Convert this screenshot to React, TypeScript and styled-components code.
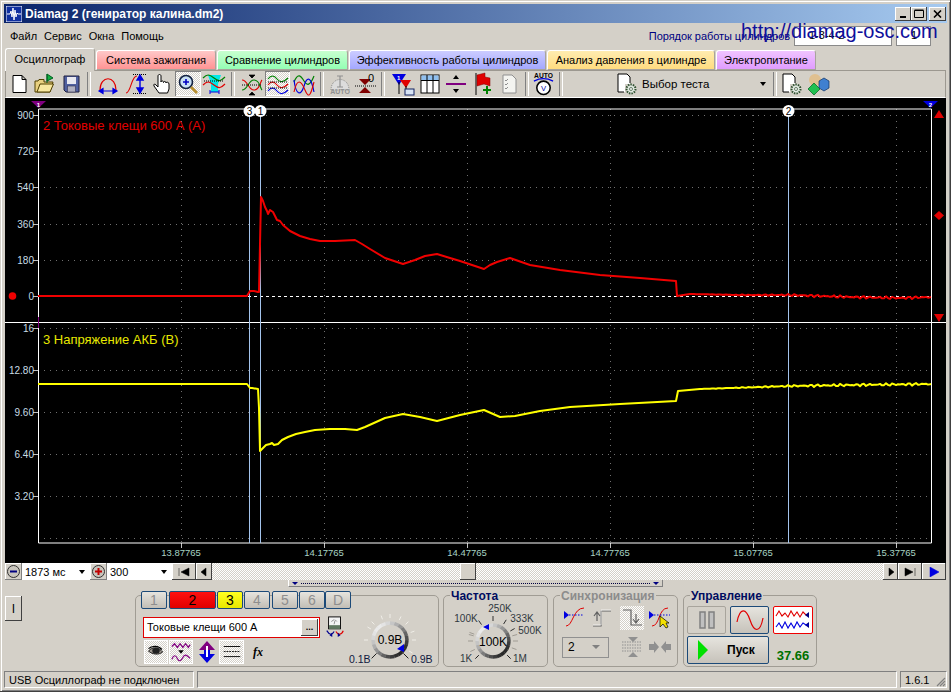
import React from 'react';
import styled, { createGlobalStyle } from 'styled-components';

const FACE = '#d4d0c8';
const UI = '"Liberation Sans", Arial, sans-serif';

const Global = createGlobalStyle`
  html, body { margin: 0; padding: 0; background: ${FACE}; overflow: hidden; }
  * { box-sizing: border-box; }
`;

const Win = styled.div`
  position: relative;
  width: 951px;
  height: 692px;
  padding: 4px;
  background: ${FACE};
  font: 11px ${UI};
  color: #000;
  display: flex;
  flex-direction: column;
  box-shadow: inset -1px -1px 0 #404040, inset 1px 1px 0 ${FACE}, inset 2px 2px 0 #fff, inset -2px -2px 0 #808080;
`;
const TitleBar = styled.div`
  height: 19px;
  flex: none;
  display: flex;
  align-items: center;
  padding: 0 1px 0 2px;
  background: linear-gradient(90deg, #0a246a, #a6caf0);
  color: #fff;
  font: bold 12px ${UI};
`;
const TitleText = styled.span`
  flex: 1;
  margin-left: 3px;
  white-space: nowrap;
`;
const WinBtn = styled.div<{ $gap?: number; $w?: number }>`
  width: ${p => p.$w ?? 16}px;
  height: 14px;
  margin-left: ${p => p.$gap ?? 0}px;
  background: ${FACE};
  box-shadow: inset -1px -1px 0 #404040, inset 1px 1px 0 #fff;
  display: flex;
  align-items: center;
  justify-content: center;
`;
const MenuBar = styled.div`
  height: 23px;
  flex: none;
  display: flex;
  align-items: center;
  padding: 2px 16px 0 6px;
`;
const MenuItem = styled.span`
  margin-right: 7px;
  font-size: 11px;
`;
const Spacer = styled.div`
  flex: 1;
`;
const OrderLabel = styled.span`
  color: #000080;
  margin-right: 4px;
  letter-spacing: -0.05px;
`;
const OrderCombo = styled.div<{ $w: number; $ml?: number }>`
  width: ${p => p.$w}px;
  height: 20px;
  margin-left: ${p => p.$ml ?? 0}px;
  background: #fff;
  border: 1px solid #8a8a8a;
  padding: 2px 0 0 14px;
  font-size: 11px;
`;
const Watermark = styled.div`
  position: absolute;
  left: 741px;
  top: 20px;
  font: 20px ${UI};
  color: #10109c;
  white-space: nowrap;
`;
const TabRow = styled.div`
  height: 24px;
  flex: none;
  display: flex;
  align-items: flex-end;
  gap: 1px;
  padding-left: 1px;
  position: relative;
  z-index: 1;
`;
const Tab = styled.div<{ $w: number; $from?: string; $to?: string; $active?: boolean }>`
  width: ${p => p.$w}px;
  height: ${p => (p.$active ? 23 : 20)}px;
  margin-bottom: ${p => (p.$active ? -1 : 0)}px;
  display: flex;
  align-items: center;
  justify-content: center;
  padding-bottom: ${p => (p.$active ? 3 : 0)}px;
  font-size: 11px;
  border-radius: 3px 3px 0 0;
  border: 1px solid #a8a49c;
  border-bottom: ${p => (p.$active ? 'none' : '1px solid #a8a49c')};
  border-top-color: #fff;
  border-left-color: #fff;
  background: ${p => (p.$active ? FACE : `linear-gradient(${p.$from}, ${p.$to})`)};
`;
const Inner = styled.div`
  flex: 1;
  display: flex;
  flex-direction: column;
  padding: 0 1px;
  min-height: 0;
`;
const Toolbar = styled.div`
  height: 28px;
  flex: none;
  display: flex;
  align-items: center;
  border: 1px solid #9c9890;
  border-bottom: 1px solid #fff;
  padding-bottom: 1px;
`;
const ToolBtn = styled.div<{ $w: number; $on?: boolean }>`
  width: ${p => p.$w}px;
  height: 25px;
  flex: none;
  display: flex;
  align-items: center;
  justify-content: center;
  background: ${p => (p.$on ? 'repeating-conic-gradient(#fff 0 25%, #d4d0c8 0 50%) 0 0/2px 2px' : 'transparent')};
  box-shadow: ${p => (p.$on ? 'inset 1px 1px 0 #808080, inset -1px -1px 0 #fff' : 'none')};
`;
const Sep = styled.div<{ $w: number }>`
  width: ${p => p.$w}px;
  height: 24px;
  flex: none;
  display: flex;
  justify-content: center;
  &::after {
    content: '';
    width: 2px;
    height: 100%;
    border-left: 1px solid #808080;
    border-right: 1px solid #fff;
  }
`;
const TestSelect = styled.div`
  width: 205px;
  flex: none;
  display: flex;
  align-items: center;
  padding-left: 48px;
  gap: 3px;
  font-size: 11.5px;
`;
const Caret = styled.i`
  display: block;
  width: 0;
  height: 0;
  border: 3px solid transparent;
  border-top: 4px solid #000;
  border-bottom: 0;
  margin-left: auto;
  margin-right: 6px;
`;
const Scope = styled.svg`
  display: block;
  width: 941px;
  height: 465px;
  flex: none;
  background: #000;
`;
const SliderRow = styled.div`
  height: 17px;
  flex: none;
  display: flex;
  align-items: stretch;
`;
const RoundBtn = styled.div`
  width: 17px;
  display: flex;
  align-items: center;
  justify-content: center;
  background: ${FACE};
  box-shadow: inset -1px -1px 0 #808080, inset 1px 1px 0 #fff;
`;
const TimeCombo = styled.div<{ $w: number }>`
  width: ${p => p.$w}px;
  background: #fff;
  display: flex;
  align-items: center;
  padding-left: 3px;
  font-size: 11px;
  ${Caret} { margin-right: 5px; }
`;
const NavBtn = styled.div<{ $w: number }>`
  width: ${p => p.$w}px;
  flex: none;
  display: flex;
  align-items: center;
  justify-content: center;
  background: ${FACE};
  box-shadow: inset -1px -1px 0 #404040, inset 1px 1px 0 #fff;
`;
const Track = styled.div`
  flex: 1;
  display: flex;
  background: repeating-conic-gradient(#fff 0 25%, #d4d0c8 0 50%) 0 0/2px 2px;
  padding-left: 248px;
`;
const Thumb = styled.div`
  width: 16px;
  background: ${FACE};
  box-shadow: inset -1px -1px 0 #404040, inset 1px 1px 0 #fff;
`;
const SplitRow = styled.div`
  height: 7px;
  flex: none;
  padding-left: 283px;
`;
const Split = styled.div`
  width: 375px;
  height: 7px;
  display: flex;
  align-items: center;
  justify-content: space-between;
  padding: 0 3px;
  border: 1px solid #808080;
  border-top: none;
  border-left-color: #fff;
  background: ${FACE};
`;
const SplitDots = styled.div`
  flex: 1;
  height: 0;
  margin: 0 3px;
  border-top: 1px dotted #000040;
`;
const SplitArrow = styled.i`
  display: block;
  width: 0;
  height: 0;
  border: 3px solid transparent;
  border-top: 3px solid #000080;
  border-bottom: 0;
`;
const Bottom = styled.div`
  height: 84px;
  flex: none;
  display: flex;
  align-items: flex-start;
`;
const IBtn = styled.div`
  width: 17px;
  height: 25px;
  margin-top: 9px;
  margin-right: 113px;
  display: flex;
  align-items: center;
  justify-content: center;
  font-size: 12px;
  background: ${FACE};
  box-shadow: inset -1px -1px 0 #404040, inset 1px 1px 0 #fff;
`;
const Group = styled.div<{ $w: number; $ml?: number }>`
  position: relative;
  width: ${p => p.$w}px;
  height: 72px;
  margin-top: 8px;
  margin-left: ${p => p.$ml ?? 0}px;
  border: 1px solid #a09c94;
  border-radius: 5px;
  flex: none;
`;
const Legend = styled.span<{ $off?: boolean }>`
  position: absolute;
  top: -5px;
  left: 6px;
  padding: 0 1px;
  background: ${FACE};
  font: bold 12px/11px ${UI};
  color: ${p => (p.$off ? '#8c8c8c' : '#000c60')};
  white-space: nowrap;
`;
const ChannelRow = styled.div`
  display: flex;
  margin: -5px 0 0 5px;
  height: 18px;
`;
const Channel = styled.div<{ $w: number; $tone: 'off' | 'red' | 'yellow'; $ml: number }>`
  width: ${p => p.$w}px;
  margin-left: ${p => p.$ml}px;
  border: 1px solid #1c4a78;
  border-radius: 2px;
  display: flex;
  align-items: center;
  justify-content: center;
  font: 14px ${UI};
  color: ${p => (p.$tone === 'off' ? '#8e8e8e' : '#000')};
  background: ${p =>
    p.$tone === 'red'
      ? 'linear-gradient(#ff1010, #e00000)'
      : p.$tone === 'yellow'
      ? 'linear-gradient(#ffff20, #e8e800)'
      : 'linear-gradient(#e6e4de, #c2beb6)'};
`;
const ChannelBody = styled.div`
  display: flex;
`;
const ChannelLeft = styled.div`
  width: 210px;
  padding: 7px 0 0 7px;
  display: flex;
  flex-direction: column;
`;
const SensorRow = styled.div`
  display: flex;
  gap: 4px;
  align-items: center;
`;
const Sensor = styled.div`
  width: 177px;
  height: 21px;
  border: 1px solid #e00000;
  background: #fff;
  display: flex;
  align-items: center;
  justify-content: space-between;
  padding: 0 1px 0 3px;
  font-size: 11px;
`;
const DotsBtn = styled.div`
  width: 17px;
  height: 17px;
  background: ${FACE};
  box-shadow: inset -1px -1px 0 #404040, inset 1px 1px 0 #fff;
  display: flex;
  align-items: center;
  justify-content: center;
  font: bold 9px/6px ${UI};
`;
const IconRow = styled.div`
  display: flex;
  margin-top: 2px;
  padding-left: 1px;
  align-items: center;
`;
const ChBtn = styled.div<{ $w: number; $on?: boolean; $ml?: number }>`
  width: ${p => p.$w}px;
  height: 24px;
  margin-left: ${p => p.$ml ?? 0}px;
  flex: none;
  display: flex;
  align-items: center;
  justify-content: center;
  background: ${p => (p.$on ? 'repeating-conic-gradient(#fff 0 25%, #d4d0c8 0 50%) 0 0/2px 2px' : 'transparent')};
  border: ${p => (p.$on ? '1px solid #fff' : 'none')};
`;
const Fx = styled.span`
  font: italic bold 12px "Liberation Serif", serif;
`;
const KnobSvg = styled.svg<{ $w: number; $h: number }>`
  display: block;
  width: ${p => p.$w}px;
  height: ${p => p.$h}px;
  flex: none;
`;
const SyncGrid = styled.div`
  display: grid;
  grid-template-columns: 43px 13px 28px 28px;
  grid-template-rows: 24px 24px;
  align-items: center;
  justify-items: center;
  padding: 10px 0 0 8px;
  row-gap: 5px;
`;
const SyncBtn = styled.div<{ $on?: boolean; $col?: number }>`
  grid-column: ${p => p.$col ?? 'auto'};
  width: 24px;
  height: 24px;
  display: flex;
  align-items: center;
  justify-content: center;
  background: ${p => (p.$on ? 'repeating-conic-gradient(#fff 0 25%, #d4d0c8 0 50%) 0 0/2px 2px' : 'transparent')};
`;
const SyncFirstRow = styled.div`
  grid-column: 1 / 3;
  justify-self: stretch;
  display: flex;
  justify-content: space-between;
  padding: 0 3px 0 1px;
`;
const SyncCombo = styled.div`
  grid-column: 1 / 3;
  justify-self: start;
  width: 47px;
  height: 21px;
  border: 1px solid #909090;
  display: flex;
  align-items: center;
  padding-left: 5px;
  font-size: 12px;
  ${Caret} { margin-right: 8px; border-top-color: #808080; border-width: 4px; border-top-width: 4px; border-bottom: 0; }
`;
const CtrlGrid = styled.div`
  display: grid;
  grid-template-columns: 39px 39px 40px;
  grid-template-rows: 28px 28px;
  gap: 2px 4px;
  padding: 10px 0 0 3px;
`;
const CtrlBtn = styled.div<{ $kind: 'flat' | 'blue' | 'red'; $span?: number }>`
  grid-column: span ${p => p.$span ?? 1};
  border-radius: 2px;
  display: flex;
  align-items: center;
  justify-content: center;
  border: 1px solid ${p => (p.$kind === 'flat' ? '#a8a49c' : p.$kind === 'blue' ? '#1c4a78' : '#f00000')};
  background: ${p =>
    p.$kind === 'red' ? '#fff' : p.$kind === 'blue' ? 'linear-gradient(#e6e4de, #c6c2ba)' : FACE};
`;
const StartBtn = styled(CtrlBtn)`
  justify-content: flex-start;
  padding-left: 9px;
  gap: 18px;
  font: bold 12px ${UI};
`;
const Rate = styled.div`
  align-self: end;
  justify-self: center;
  font: bold 13px ${UI};
  color: #007000;
  padding-bottom: 1px;
`;
const Status = styled.div`
  height: 17px;
  flex: none;
  display: flex;
  gap: 3px;
  margin: 0 -1px;
`;
const StatusCell = styled.div<{ $w?: number }>`
  width: ${p => (p.$w ? `${p.$w}px` : 'auto')};
  flex: ${p => (p.$w ? 'none' : '1')};
  position: relative;
  display: flex;
  align-items: center;
  padding-left: 4px;
  font-size: 11px;
  border: 1px solid;
  border-color: #808080 #fff #fff #808080;
`;
const Grip = styled.svg`
  position: absolute;
  right: 0;
  bottom: 0;
  width: 12px;
  height: 12px;
`;

/* ---------- chart data ---------- */
type P = [number, number];
const RED: P[] = [
  [38, 296], [247, 296], [250, 291], [254, 291], [258, 292], [259, 292], [261, 197], [263, 201], [265, 207], [267, 211], [268, 214], [270, 210], [273, 212], [275, 216], [277, 220], [280, 221], [283, 225], [290, 231], [300, 236], [310, 239], [320, 241], [335, 241], [355, 240], [362, 244], [370, 249], [385, 258], [403, 264], [415, 260], [425, 256], [437, 254], [450, 258], [460, 261], [475, 266], [484, 269], [490, 265], [497, 262], [510, 258], [530, 265], [560, 270], [600, 275], [640, 278], [676, 281], [677, 296], [690, 294], [740, 295], [790, 295], [850, 297], [900, 298], [931, 297],
];
const YELLOW: P[] = [
  [38, 384], [247, 384], [250, 388], [252, 388], [258, 389], [259, 408], [260, 451], [263, 448], [266, 445], [270, 444], [272, 443], [274, 445], [278, 444], [282, 440], [288, 437], [296, 434], [305, 432], [315, 430], [330, 429], [345, 429], [357, 430], [365, 427], [385, 418], [403, 414], [420, 417], [437, 421], [460, 415], [484, 410], [500, 417], [515, 416], [540, 411], [570, 407], [620, 404], [676, 401], [678, 391], [700, 389], [790, 386], [850, 385], [931, 384],
];
/* the trace gets a little noise towards its right end */
const roughen = (a: P[], from: number, amp: number): P[] => {
  const out: P[] = [];
  a.forEach((p, i) => {
    const n = a[i + 1];
    if (!n || n[0] <= from) {
      out.push(p);
      return;
    }
    for (let x = p[0]; x < n[0]; x += 2) {
      const y = p[1] + ((n[1] - p[1]) * (x - p[0])) / (n[0] - p[0]);
      const g = Math.min(1, (x - from) / 120);
      out.push([x, y + amp * g * Math.sin(x * 1.7) * Math.cos(x * 0.61)]);
    }
  });
  return out;
};
const pts = (a: P[]) => a.map(p => p.join(',')).join(' ');
const TIMES: [number, string][] = [[181, '13.87765'], [324, '14.17765'], [467, '14.47765'], [610, '14.77765'], [753, '15.07765'], [896, '15.37765']];
const Y1: [number, string][] = [[115, '900'], [151, '720'], [187, '540'], [224, '360'], [260, '180'], [296, '0']];
const Y2: [number, string][] = [[328, '16'], [370, '12.80'], [412, '9.60'], [454, '6.40'], [496, '3.20']];
const GRID_Y = [115, 151, 187, 224, 260, 328, 370, 412, 454, 496, 538];
const AXIS = '#c8dce4';

const Cursor = ({ x, n }: { x: number; n: string }) => (
  <g>
    <line x1={x + 0.5} x2={x + 0.5} y1={109} y2={543} stroke="#a4c4ec" />
    <circle cx={x + 0.5} cy={111} r={6} fill="#fff" />
    <text x={x + 0.5} y={115} textAnchor="middle" fontSize={10} fill="#000" fontFamily={UI}>{n}</text>
  </g>
);

const ScopeChart = () => (
  <Scope viewBox="5 98 941 465" fontFamily={UI}>
    {GRID_Y.map(y => (
      <line key={y} x1={38} x2={931} y1={y + 0.5} y2={y + 0.5} stroke="#707070" strokeDasharray="1 5" />
    ))}
    {TIMES.map(([x, t]) => (
      <g key={t}>
        <line x1={x + 0.5} x2={x + 0.5} y1={109} y2={543} stroke="#707070" strokeDasharray="1 5" />
        <line x1={x + 0.5} x2={x + 0.5} y1={543} y2={548} stroke="#c0c0c0" />
        <text x={x} y={556} textAnchor="middle" fontSize={9.5} fill="#a8d4c4">{t}</text>
      </g>
    ))}
    {[...Y1, ...Y2].map(([y, t]) => (
      <g key={t}>
        <line x1={33} x2={38} y1={y + 0.5} y2={y + 0.5} stroke="#c0c0c0" />
        <text x={34} y={y + 4} textAnchor="end" fontSize={10} fill={AXIS}>{t}</text>
      </g>
    ))}
    <line x1={38} x2={931} y1={296.5} y2={296.5} stroke="#fff" strokeDasharray="3 3" />
    <path d="M38.5 109V543H931.5V109H38.5M5 322.5H946" fill="none" stroke="#fff" />
    <line x1={38.5} x2={38.5} y1={317} y2={328} stroke="#800080" />
    <Cursor x={249} n="3" />
    <Cursor x={260} n="1" />
    <Cursor x={788} n="2" />
    <polyline points={pts(roughen(RED, 700, 1.4))} fill="none" stroke="#f00000" strokeWidth={2} strokeLinejoin="round" />
    <polyline points={pts(roughen(YELLOW, 700, 1.4))} fill="none" stroke="#ffff00" strokeWidth={2} strokeLinejoin="round" />
    <text x={43} y={130} fontSize={13} fill="#e00000">2 Токовые клещи 600 А (А)</text>
    <text x={43} y={344} fontSize={13} fill="#e8e800">3 Напряжение АКБ (В)</text>
    <path d="M31 101H46L38.5 108Z" fill="#800080" />
    <text x={38.5} y={107} textAnchor="middle" fontSize={6} fontWeight="bold" fill="#fff">1</text>
    <path d="M923 101H938L930.5 108Z" fill="#0000e0" />
    <text x={930.5} y={107} textAnchor="middle" fontSize={6} fontWeight="bold" fill="#fff">2</text>
    <path d="M939 110L944 118H934Z" fill="#e00000" />
    <path d="M939 211L944 215.5L939 220L934 215.5Z" fill="#e00000" />
    <path d="M934 314H944L939 322Z" fill="#e00000" />
    <circle cx={12.5} cy={296} r={3.8} fill="#f00000" />
  </Scope>
);

/* ---------- icons ---------- */
type IP = { children: React.ReactNode; s?: number };
const Ic = ({ children, s = 24 }: IP) => (
  <svg width={s} height={s} viewBox="0 0 24 24" fill="none">{children}</svg>
);
const Blue = '#0000e0';
const IconNew = () => <Ic><path d="M6 3.5H15L19 7.5V20.5H6Z M15 3.5V7.5H19" fill="#fff" stroke="#000" /></Ic>;
const IconOpen = () => <Ic><path d="M3 20V9H6L7 7.5H12V10H21L18 20Z" fill="#e8d080" stroke="#504000" /><path d="M5 20L8 12H21.5L18 20Z" fill="#f8e8a0" stroke="#504000" /><path d="M15 2V11M15 2L21 6L15 9Z" fill="#10b040" stroke="#006020" /></Ic>;
const IconSave = () => <Ic><path d="M5 4H20V20H7L5 18Z" fill="#5060a0" stroke="#202040" /><rect x="8" y="5" width="9" height="7" fill="#e8e8f0" /><rect x="8.5" y="14" width="8" height="6" fill="#b0b0c0" stroke="#303050" strokeWidth=".6" /></Ic>;
const IconArcWidth = () => <Ic><path d="M4 18C4 3 20 3 20 18" stroke="#e00000" strokeWidth="1.2" /><path d="M4 19H20M3 19L7 16.5V21.5ZM21 19L17 16.5V21.5Z" stroke={Blue} fill={Blue} strokeWidth="1.2" /></Ic>;
const IconSHeight = () => <Ic><path d="M2 21C7 21 7 4 13 4" stroke="#e00000" strokeWidth="1.1" /><path d="M9 2.5H22M9 21.5H22" stroke="#000" strokeDasharray="1 1" /><path d="M16 5V19M16 3L13 8H19ZM16 21L13 16H19Z" stroke={Blue} fill={Blue} strokeWidth="1.4" /></Ic>;
const IconHand = () => <Ic><path d="M9 21L4 14C3 12 5 11.5 6 13L8 15V4C8 2 11 2 11 4V10C11 8.5 13.5 8.5 13.5 10.5C13.5 9 16 9 16 11C16 9.8 19 9.8 19 12V17L17.5 21Z" fill="#fff" stroke="#000" strokeWidth="1" /></Ic>;
const IconZoom = () => <Ic><circle cx="10" cy="10" r="6.5" fill="#c8e0f4" stroke="#102040" strokeWidth="1.6" /><path d="M7 10H13M10 7V13" stroke="#0000c0" strokeWidth="1.6" /><path d="M15 15L21 21" stroke="#b89030" strokeWidth="2.6" /></Ic>;
const IconCyan = () => <Ic><path d="M6 3H19L16 12V20H9V12Z" fill="#00e8e8" /><path d="M1 6C5 2 7 2 12 6S19 9 23 5" stroke="#008000" strokeWidth="1.2" /><path d="M1 13C5 9 7 9 12 13S19 16 23 12" stroke="#e00000" strokeWidth="1.2" /><path d="M2 9H22" stroke="#000" strokeDasharray="1 1" /><path d="M8 20H17M8 18V22M17 18V22" stroke={Blue} /></Ic>;
const IconCross = () => <Ic><path d="M2 8C8 8 8 18 14 18S20 10 22 8" stroke="#e00000" strokeWidth="1.1" /><path d="M2 18C8 18 8 8 14 8S20 16 22 18" stroke="#008000" strokeWidth="1.1" /><path d="M12 6V4M9 3H15L12 6ZM9 23H15L12 20Z" fill="#000" stroke="#000" strokeWidth=".7" /><path d="M2 13H22" stroke="#000" strokeDasharray="1 1" /></Ic>;
const IconStack = () => <Ic>{['#008000', '#e00000', Blue].map((c, i) => <path key={c} d={`M2 ${7 + i * 6}C5 ${3 + i * 6} 8 ${3 + i * 6} 11 ${7 + i * 6}S18 ${10 + i * 6} 22 ${6 + i * 6}`} stroke={c} strokeWidth="1.2" />)}<path d="M2 10H22M2 16H22" stroke="#000" strokeDasharray="1 1" /></Ic>;
const IconOverlay = () => <Ic><path d="M2 10C6 0 9 4 12 9S18 14 22 4" stroke="#008000" strokeWidth="1.2" /><path d="M2 8C4 24 9 24 12 14S19 4 22 20" stroke={Blue} strokeWidth="1.2" /><path d="M2 20C5 6 9 8 13 18S19 22 22 10" stroke="#e00000" strokeWidth="1.1" /></Ic>;
const IconAutoGrey = () => <Ic><path d="M3 18C3 4 21 4 21 18Z" fill="#dcdcdc" stroke="#909090" strokeDasharray="1 1" /><path d="M12 4V15M9 4H15M9 15H15" stroke="#909090" strokeWidth="1.2" /><text x="12" y="22" textAnchor="middle" fontSize="7" fontWeight="bold" fill="#909090" fontFamily={UI}>AUTO</text></Ic>;
const IconZero = () => <Ic><path d="M6 7H18L12 13ZM6 21H18L12 15Z" fill="#800000" /><path d="M2 14H23" stroke="#000" strokeDasharray="1 1" /><text x="18" y="10" textAnchor="middle" fontSize="11" fill="#000" fontFamily={UI}>0</text></Ic>;
const IconFilter = () => <Ic><path d="M1 2H15L8 13Z" fill={Blue} /><path d="M9 8H20L15 16Z" fill="#e00000" /><path d="M8 10V22M15 14V19" stroke="#000" /><rect x="14" y="17" width="9" height="6" fill="#d8e4f4" stroke="#102060" /><text x="6" y="8" fontSize="6" fontWeight="bold" fill="#fff" fontFamily={UI}>1</text></Ic>;
const IconTable = () => <Ic><rect x="3" y="3" width="18" height="18" fill="#fff" stroke="#000" /><rect x="3.5" y="3.5" width="17" height="5" fill="#90c0f0" /><path d="M3 8.5H21M9 3V21M15 3V21" stroke="#000" /></Ic>;
const IconDivider = () => <Ic><path d="M2 12H22" stroke="#800080" strokeWidth="2" /><path d="M9 7L12 3L15 7ZM9 17L12 21L15 17Z" fill="#000" /></Ic>;
const IconFlag = () => <Ic><path d="M6 1V23" stroke="#000" /><path d="M7 3L15 1V5L20 6V14L14 12L7 14Z" fill="#e00000" stroke="#800000" strokeWidth=".5" /><path d="M17 14V22M13 18H21" stroke="#008000" strokeWidth="2" /></Ic>;
const IconCheckDoc = () => <Ic><path d="M6 3H15L19 7V21H6Z" fill="#f4f4f0" stroke="#909090" /><path d="M8 8L9 9L11 7M8 12L9 13L11 11M8 16L9 17L11 15" stroke="#909090" /></Ic>;
const IconAutoV = () => <Ic><text x="12" y="6" textAnchor="middle" fontSize="7" fontWeight="bold" fill="#000" fontFamily={UI}>AUTO</text><path d="M2 9C8 6 16 6 22 9" stroke={Blue} strokeWidth="1.3" /><circle cx="12" cy="16" r="7" fill="#fff" stroke="#000" strokeWidth="1.6" /><text x="12" y="19" textAnchor="middle" fontSize="8" fill="#0000a0" fontFamily={UI}>V</text></Ic>;
const IconTestDoc = () => <Ic><path d="M3 2H12L15 5V12H10V20H3Z" fill="#fff" /><path d="M3 2H12L15 5V11M3 2V20H9" stroke="#000" /><circle cx="16" cy="17" r="4.5" fill="#e0e8e0" stroke="#305030" strokeWidth="2" strokeDasharray="1.5 1" /><circle cx="16" cy="17" r="1.5" fill="#fff" stroke="#305030" strokeWidth=".7" /></Ic>;
const IconCubes = () => <Ic><circle cx="8" cy="8" r="6" fill="#e0c090" /><path d="M12 9L17 6L22 9V16L17 19L12 16Z" fill="#4080d0" stroke="#103060" strokeWidth=".7" /><path d="M7 11L13 17L7 23L1 17Z" fill="#20c050" stroke="#006020" strokeWidth=".7" /></Ic>;
const IconEye = () => <Ic s={20}><path d="M3 11C8 5 15 6 20 12C15 16 8 15 3 11Z" fill="#a09890" stroke="#000" /><ellipse cx="12" cy="10.5" rx="4.5" ry="3.5" fill="#202020" /><path d="M3 8C7 4 15 4 19 9" stroke="#000" strokeWidth="1.5" /></Ic>;
const IconWaves = () => <Ic s={22}><path d="M2 6L5 3L8 7L11 3L14 7L17 3L20 7L22 4" stroke="#800080" strokeWidth="1.3" /><path d="M2 20C4 15 6 15 8 19S12 22 14 18S18 15 22 19" stroke="#800080" strokeWidth="1.3" /><path d="M9 10H15L12 14Z" fill="#000" /></Ic>;
const IconUpDown = () => <Ic><path d="M9 10H4L12 1L20 10H15V14H9Z" fill="#800080" /><path d="M9 14H4L12 23L20 14H15V10H9Z" fill={Blue} /><path d="M12 6V17" stroke="#fff" strokeWidth="2" /></Ic>;
const IconLines = () => <Ic s={22}><path d="M3 6H21M3 17H21" stroke="#000" /><path d="M3 11.5H21" stroke="#000" strokeDasharray="2 1" /></Ic>;
const IconMeter = () => <Ic s={22}><rect x="5" y="1" width="13" height="13" fill="#f4f4f4" stroke="#000" /><rect x="5.5" y="10" width="12" height="4" fill="#607860" /><path d="M8 6L11 4M14 6L12 4M11 9L12 5" stroke="#606060" strokeWidth=".7" /><path d="M11 17C9 21 6 21 3 16" stroke="#000090" strokeWidth="1.3" /><path d="M13 17C15 21 19 21 21 16" stroke="#e00000" strokeWidth="1.3" /><path d="M9 18L6 21L9 23ZM15 18L18 21L15 23Z" fill="#000090" /></Ic>;
const Sine = ({ stroke }: { stroke: string }) => <svg width="28" height="24" viewBox="0 0 28 24" fill="none"><path d="M1 14C4 -1 10 0 14 12S24 26 27 10" stroke={stroke} strokeWidth="1.2" /></svg>;
const IconMulti = () => <svg width="37" height="24" viewBox="0 0 37 24" fill="none"><path d="M1 8L4 3L7 8L10 5L13 9L16 3L19 8L22 4L25 9L28 4L31 7H34" stroke="#e00000" strokeWidth="1.1" /><path d="M34 4L30 7L34 10Z M34 14L30 17L34 20Z" fill="#000080" /><path d="M1 19L4 15L7 20L10 14L13 20L16 15L19 20L22 14L25 19L28 15L31 17H34" stroke={Blue} strokeWidth="1.1" /></svg>;
const IconPause = () => <svg width="18" height="20" viewBox="0 0 18 20"><rect x="2" y="2" width="5" height="16" fill="#c0c0c0" stroke="#808080" strokeWidth="1.5" /><rect x="11" y="2" width="5" height="16" fill="#c0c0c0" stroke="#808080" strokeWidth="1.5" /></svg>;
const IconPlay = () => <svg width="12" height="20" viewBox="0 0 12 20"><path d="M1 0L11 10L1 20Z" fill="#00e000" /></svg>;
const SyncRise = () => <Ic><path d="M3 20C10 20 10 2 21 2" stroke="#e00000" strokeWidth="1" /><path d="M3 9H20" stroke={Blue} strokeDasharray="1.5 1.5" /><path d="M1 5V13L6 9Z" fill={Blue} /></Ic>;
const SyncStepUp = () => <Ic><path d="M2 20H10V5H20" stroke="#606060" strokeWidth="1.2" /><path d="M2 19H10V4H20" stroke="#fff" strokeWidth=".7" /><path d="M6 6V15M3 10L6 6L9 10" stroke="#606060" strokeWidth="1.2" /></Ic>;
const SyncStepDown = () => <Ic><path d="M3 4H11V19H22" stroke="#606060" strokeWidth="1.2" /><path d="M16 8V17M13 13L16 17L19 13" stroke="#606060" strokeWidth="1.2" /></Ic>;
const SyncCursor = () => <Ic><path d="M4 20C12 20 10 2 20 2" stroke="#e00000" strokeWidth="1" /><path d="M3 9H22" stroke={Blue} strokeDasharray="1.5 1.5" /><path d="M1 5V13L6 9Z" fill={Blue} /><path d="M12 10V21L15 18L18 22L20 21L18 17L21 17Z" fill="#f4e000" stroke="#000" strokeWidth=".7" /></Ic>;
const SyncMerge = () => <Ic><path d="M8 2H18L13 7ZM8 22H18L13 17Z" fill="#909090" /><path d="M2 7H21M2 10H21M2 13H21M2 16H21" stroke="#909090" strokeDasharray="1.5 1" /></Ic>;
const SyncArrows = () => <Ic><path d="M1 9V15H6V18L11 12L6 6V9ZM23 9V15H18V18L13 12L18 6V9Z" fill="#909090" /></Ic>;
const MinusMark = () => <svg width="15" height="15" viewBox="0 0 15 15"><circle cx="7.5" cy="7.5" r="6" fill="#c8c4bc" stroke="#303030" /><path d="M4 7.5H11" stroke="#000080" strokeWidth="2" /></svg>;
const PlusMark = () => <svg width="15" height="15" viewBox="0 0 15 15"><circle cx="7.5" cy="7.5" r="6" fill="#c8c4bc" stroke="#303030" /><path d="M4 7.5H11M7.5 4V11" stroke="#c00000" strokeWidth="2" /></svg>;
const Nav = ({ d, fill = '#000' }: { d: string; fill?: string }) => <svg width="12" height="10" viewBox="0 0 12 10"><path d={d} fill={fill} stroke={fill} strokeWidth=".5" /></svg>;

/* ---------- knob ---------- */
const ring = (cx: number, cy: number, r: number) => {
  const out: React.ReactNode[] = [];
  for (let a = 0; a < 360; a += 15) {
    const rad = (d: number) => (d * Math.PI) / 180;
    const x1 = cx + r * Math.cos(rad(a));
    const y1 = cy + r * Math.sin(rad(a));
    const x2 = cx + r * Math.cos(rad(a + 16));
    const y2 = cy + r * Math.sin(rad(a + 16));
    const t = (Math.cos(rad(a + 7 - 45)) + 1) / 2;
    const v = Math.round(235 - t * 195);
    out.push(<line key={a} x1={x1} y1={y1} x2={x2} y2={y2} stroke={`rgb(${v},${v},${v})`} strokeWidth={3.5} />);
  }
  return out;
};
const ticks = (cx: number, cy: number, r1: number, r2: number, angles: number[], color: string) =>
  angles.map(a => {
    const t = (a * Math.PI) / 180;
    return <line key={a} x1={cx + r1 * Math.cos(t)} y1={cy + r1 * Math.sin(t)} x2={cx + r2 * Math.cos(t)} y2={cy + r2 * Math.sin(t)} stroke={color} />;
  });

const VoltKnob = () => (
  <KnobSvg $w={90} $h={58} viewBox="346 609 90 58" fontFamily={UI} fontSize={10.5} fill="#000">
    {ticks(390, 640, 22, 26, [-135, -110, -65, -45, 0, 180, -150, 30, -90, -20], '#f0eee8')}
    {ticks(390, 640, 19, 26, [135, 45], '#202020')}
    {ring(390, 640, 17)}
    <text x={390} y={644} textAnchor="middle" fontSize={12}>0.9В</text>
    <path d="M397 649L404 644L404 652Z" fill="#0000e0" />
    <text x={349} y={663} fill="#101840">0.1В</text>
    <text x={411} y={663} fill="#101840">0.9В</text>
  </KnobSvg>
);
const FreqKnob = () => (
  <KnobSvg $w={103} $h={70} viewBox="444 596 103 70" fontFamily={UI} fontSize={10} fill="#303840">
    {ticks(493, 641, 20, 25, [-90, -58, -30, -125], '#303030')}
    {ticks(493, 641, 20, 25, [0, 20, -15, 155, 180, 200, -165], '#a09c94')}
    {ticks(493, 641, 20, 25, [135, 45], '#202020')}
    {ring(493, 641, 16)}
    <text x={493} y={646} textAnchor="middle" fontSize={12} fill="#000">100K</text>
    <path d="M483 627L489 624L489 630Z" fill="#0000e0" />
    <text x={500} y={612} textAnchor="middle">250K</text>
    <text x={466} y={622} textAnchor="middle">100K</text>
    <text x={522} y={622} textAnchor="middle">333K</text>
    <text x={530} y={634} textAnchor="middle">500K</text>
    <text x={466} y={662} textAnchor="middle">1K</text>
    <text x={520} y={662} textAnchor="middle">1M</text>
  </KnobSvg>
);

const TABS = [
  { t: 'Система зажигания', w: 120, a: '#ffc8c8', b: '#ff9494' },
  { t: 'Сравнение цилиндров', w: 131, a: '#c8ffd0', b: '#94ffb4' },
  { t: 'Эффективность работы цилиндров', w: 197, a: '#ccccff', b: '#a4a8ff' },
  { t: 'Анализ давления в цилиндре', w: 168, a: '#ffecb0', b: '#ffdc80' },
  { t: 'Электропитание', w: 100, a: '#f0c4ff', b: '#e09cff' },
];
const CHANNELS: { t: string; w: number; ml: number; tone: 'off' | 'red' | 'yellow' }[] = [
  { t: '1', w: 26, ml: 0, tone: 'off' },
  { t: '2', w: 47, ml: 2, tone: 'red' },
  { t: '3', w: 26, ml: 1, tone: 'yellow' },
  { t: '4', w: 26, ml: 1, tone: 'off' },
  { t: '5', w: 26, ml: 2, tone: 'off' },
  { t: '6', w: 26, ml: 1, tone: 'off' },
  { t: 'D', w: 26, ml: 0, tone: 'off' },
];

export default function App() {
  return (
    <Win>
      <Global />
      <TitleBar>
        <svg width="16" height="16" viewBox="0 0 16 16"><rect width="16" height="16" fill="#1030a0" stroke="#fff" /><path d="M1 8H4L5 5L6 11L7 2L8 14L9 4L10 11L11 7L12 8H15" stroke="#fff" fill="none" /></svg>
        <TitleText>Diamag 2 (гениратор калина.dm2)</TitleText>
        <WinBtn><svg width="8" height="8"><path d="M1 7H7" stroke="#000" strokeWidth="2" /></svg></WinBtn>
        <WinBtn><svg width="10" height="9"><path d="M.5 1.5H9.5V8.5H.5ZM.5 1H9.5" fill="none" stroke="#000" /></svg></WinBtn>
        <WinBtn $gap={2} $w={17}><svg width="9" height="8"><path d="M1 .5L8 7.5M8 .5L1 7.5" stroke="#000" strokeWidth="1.6" /></svg></WinBtn>
      </TitleBar>
      <MenuBar>
        <MenuItem>Файл</MenuItem>
        <MenuItem>Сервис</MenuItem>
        <MenuItem>Окна</MenuItem>
        <MenuItem>Помощь</MenuItem>
        <Spacer />
        <OrderLabel>Порядок работы цилиндров</OrderLabel>
        <OrderCombo $w={98}>1-3-4-2</OrderCombo>
        <OrderCombo $w={35} $ml={4}>1</OrderCombo>
      </MenuBar>
      <Watermark>http://diamag-osc.com</Watermark>
      <TabRow>
        <Tab $w={90} $active>Осциллограф</Tab>
        {TABS.map(t => (
          <Tab key={t.t} $w={t.w} $from={t.a} $to={t.b}>{t.t}</Tab>
        ))}
      </TabRow>
      <Inner>
        <Toolbar>
          <ToolBtn $w={25}><IconNew /></ToolBtn>
          <ToolBtn $w={26}><IconOpen /></ToolBtn>
          <ToolBtn $w={27}><IconSave /></ToolBtn>
          <Sep $w={10} />
          <ToolBtn $w={28}><IconArcWidth /></ToolBtn>
          <ToolBtn $w={27}><IconSHeight /></ToolBtn>
          <ToolBtn $w={26}><IconHand /></ToolBtn>
          <ToolBtn $w={26} $on><IconZoom /></ToolBtn>
          <ToolBtn $w={26}><IconCyan /></ToolBtn>
          <Sep $w={11} />
          <ToolBtn $w={27}><IconCross /></ToolBtn>
          <ToolBtn $w={25} $on><IconStack /></ToolBtn>
          <ToolBtn $w={27}><IconOverlay /></ToolBtn>
          <Sep $w={10} />
          <ToolBtn $w={25}><IconAutoGrey /></ToolBtn>
          <ToolBtn $w={25}><IconZero /></ToolBtn>
          <Sep $w={12} />
          <ToolBtn $w={27}><IconFilter /></ToolBtn>
          <ToolBtn $w={27}><IconTable /></ToolBtn>
          <ToolBtn $w={25}><IconDivider /></ToolBtn>
          <ToolBtn $w={28}><IconFlag /></ToolBtn>
          <ToolBtn $w={26}><IconCheckDoc /></ToolBtn>
          <Sep $w={10} />
          <ToolBtn $w={23}><IconAutoV /></ToolBtn>
          <Sep $w={12} />
          <TestSelect><IconTestDoc />Выбор теста<Caret /></TestSelect>
          <Sep $w={5} />
          <ToolBtn $w={30}><IconTestDoc /></ToolBtn>
          <ToolBtn $w={24}><IconCubes /></ToolBtn>
        </Toolbar>
        <ScopeChart />
        <SliderRow>
          <RoundBtn><MinusMark /></RoundBtn>
          <TimeCombo $w={68}>1873 мс<Caret /></TimeCombo>
          <RoundBtn><PlusMark /></RoundBtn>
          <TimeCombo $w={65}>300<Caret /></TimeCombo>
          <NavBtn $w={24}><Nav d="M1 1V9M11 1V9L3 5Z" /></NavBtn>
          <NavBtn $w={16}><Nav d="M8 1V9L3 5Z" /></NavBtn>
          <Track><Thumb /></Track>
          <NavBtn $w={15}><Nav d="M4 1V9L9 5Z" /></NavBtn>
          <NavBtn $w={24}><Nav d="M1 1V9L9 5ZM11 1V9" /></NavBtn>
          <NavBtn $w={24}><Nav d="M2 0V10L11 5Z" fill="#0000e0" /></NavBtn>
        </SliderRow>
        <SplitRow>
          <Split><SplitArrow /><SplitDots /><SplitArrow /></Split>
        </SplitRow>
        <Bottom>
          <IBtn>I</IBtn>
          <Group $w={304}>
            <ChannelRow>
              {CHANNELS.map(c => (
                <Channel key={c.t} $w={c.w} $ml={c.ml} $tone={c.tone}>{c.t}</Channel>
              ))}
            </ChannelRow>
            <ChannelBody>
              <ChannelLeft>
                <SensorRow>
                  <Sensor>Токовые клещи 600 А<DotsBtn>...</DotsBtn></Sensor>
                  <IconMeter />
                </SensorRow>
                <IconRow>
                  <ChBtn $w={24} $on><IconEye /></ChBtn>
                  <ChBtn $w={24} $on $ml={1}><IconWaves /></ChBtn>
                  <ChBtn $w={24} $ml={2}><IconUpDown /></ChBtn>
                  <ChBtn $w={25} $on><IconLines /></ChBtn>
                  <ChBtn $w={22} $ml={3}><Fx>fx</Fx></ChBtn>
                </IconRow>
              </ChannelLeft>
              <VoltKnob />
            </ChannelBody>
          </Group>
          <Group $w={105} $ml={4}>
            <Legend>Частота</Legend>
            <FreqKnob />
          </Group>
          <Group $w={125} $ml={5}>
            <Legend $off>Синхронизация</Legend>
            <SyncGrid>
              <SyncFirstRow>
                <SyncBtn><SyncRise /></SyncBtn>
                <SyncBtn><SyncStepUp /></SyncBtn>
              </SyncFirstRow>
              <SyncBtn $on $col={3}><SyncStepDown /></SyncBtn>
              <SyncBtn $col={4}><SyncCursor /></SyncBtn>
              <SyncCombo>2<Caret /></SyncCombo>
              <SyncBtn $col={3}><SyncMerge /></SyncBtn>
              <SyncBtn $col={4}><SyncArrows /></SyncBtn>
            </SyncGrid>
          </Group>
          <Group $w={134} $ml={5}>
            <Legend>Управление</Legend>
            <CtrlGrid>
              <CtrlBtn $kind="flat"><IconPause /></CtrlBtn>
              <CtrlBtn $kind="blue"><Sine stroke="#e00000" /></CtrlBtn>
              <CtrlBtn $kind="red"><IconMulti /></CtrlBtn>
              <StartBtn $kind="blue" $span={2}><IconPlay />Пуск</StartBtn>
              <Rate>37.66</Rate>
            </CtrlGrid>
          </Group>
        </Bottom>
        <Status>
          <StatusCell $w={190}>USB Осциллограф не подключен</StatusCell>
          <StatusCell />
          <StatusCell $w={47}>
            1.6.1
            <Grip viewBox="0 0 12 12"><path d="M11 3L3 11M11 6L6 11M11 9L9 11" stroke="#808080" strokeWidth="1.2" /></Grip>
          </StatusCell>
        </Status>
      </Inner>
    </Win>
  );
}
